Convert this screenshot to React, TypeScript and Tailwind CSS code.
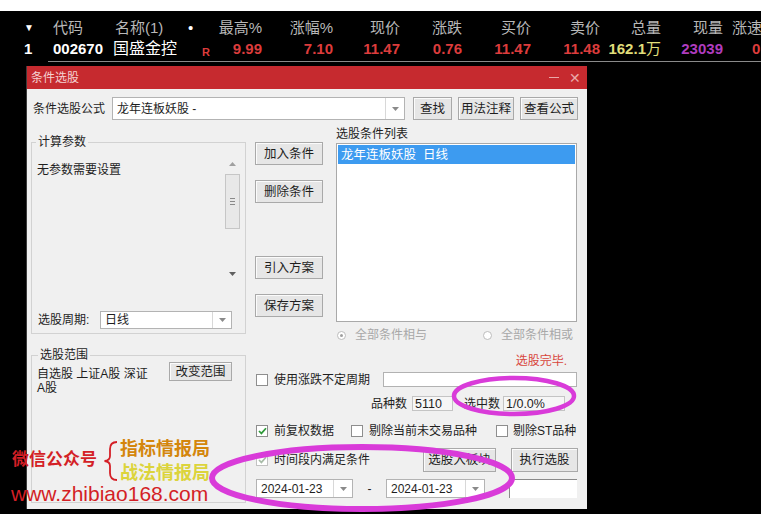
import React from 'react';

const Btn = ({ children, className = '' }: { children: React.ReactNode; className?: string }) => (
  <div
    className={`flex shrink-0 items-center justify-center border border-[#a9a9a9] bg-[#e6e6e6] text-[12.5px] leading-[14px] text-[#1e1e1e] shadow-[inset_1px_1px_0_#fbfbfb] ${className}`}
  >
    {children}
  </div>
);

const Combo = ({ text, className = '' }: { text: string; className?: string }) => (
  <div className={`flex shrink-0 border border-[#b3b3b3] bg-white ${className}`}>
    <div className="flex flex-1 items-center pl-[4px] text-[12px] leading-[14px] text-[#1e1e1e]">{text}</div>
    <div className="flex w-[19px] items-center justify-center border-l border-[#d8d8d8]">
      <svg width="7" height="4" viewBox="0 0 7 4">
        <path d="M0 0h7L3.5 4z" fill="#8a8a8a" />
      </svg>
    </div>
  </div>
);

const Check = ({ checked = false, dim = false }: { checked?: boolean; dim?: boolean }) => (
  <div
    className={`flex h-[12px] w-[12px] shrink-0 items-center justify-center border bg-white ${
      dim ? 'border-[#c2c2c2]' : 'border-[#8e8e8e]'
    }`}
  >
    {checked && (
      <svg width="9" height="8" viewBox="0 0 9 8">
        <path d="M1 4l2.4 2.4L8 1.2" stroke={dim ? '#a8bca8' : '#2f9a3a'} strokeWidth="1.7" fill="none" />
      </svg>
    )}
  </div>
);

const Radio = ({ on = false }: { on?: boolean }) => (
  <div className="flex h-[9px] w-[9px] shrink-0 items-center justify-center rounded-full border border-[#bdbdbd] bg-white">
    {on && <div className="h-[3px] w-[3px] rounded-full bg-[#a0a0a0]" />}
  </div>
);

const columns = [
  { cls: 'w-[45px] pl-[24px]', head: <span className="text-[10px] text-white">▼</span>, val: <span className="text-white">1</span> },
  { cls: 'w-[65px] pl-[8px]', head: '代码', val: <span className="text-white">002670</span> },
  { cls: 'w-[75px] pl-[5px]', head: '名称(1)', val: <span className="-ml-[2px] text-[16px] font-normal text-white">国盛金控</span> },
  { cls: 'w-[25px] pl-[3px]', head: <span className="text-white">•</span>, val: <span className="mt-[6px] pl-[14px] text-[11px] text-[#dc3c3c]">R</span> },
  { cls: 'w-[52px] justify-end', head: '最高%', val: <span className="text-[#dc3c3c]">9.99</span> },
  { cls: 'w-[71px] justify-end', head: '涨幅%', val: <span className="text-[#dc3c3c]">7.10</span> },
  { cls: 'w-[67px] justify-end', head: '现价', val: <span className="text-[#dc3c3c]">11.47</span> },
  { cls: 'w-[62px] justify-end', head: '涨跌', val: <span className="text-[#dc3c3c]">0.76</span> },
  { cls: 'w-[69px] justify-end', head: '买价', val: <span className="text-[#dc3c3c]">11.47</span> },
  { cls: 'w-[69px] justify-end', head: '卖价', val: <span className="text-[#dc3c3c]">11.48</span> },
  { cls: 'w-[61px] justify-end', head: '总量', val: <span className="text-[#e0de7a]">162.1<span className="font-normal">万</span></span> },
  { cls: 'w-[62px] justify-end', head: '现量', val: <span className="text-[#ae3cbe]">23039</span> },
  { cls: 'w-[50px] pl-[9px]', head: '涨速', val: <span className="pl-[20px] text-[#dc3c3c]">0</span> },
];

export default function App() {
  return (
    <div className="relative h-[514px] w-[761px] overflow-hidden bg-black font-[family-name:'Liberation_Sans','Noto_Sans_CJK_SC',sans-serif]">
      <div className="h-[11px] bg-white" />

      {/* quote list */}
      <div className="mt-[5px] flex h-[24px] items-center text-[15px] leading-[18px] text-[#b8b8b8]">
        {columns.map((c, i) => (
          <div key={i} className={`flex shrink-0 items-center ${c.cls}`}>
            {c.head}
          </div>
        ))}
      </div>
      <div className="flex h-[18px] items-center text-[15px] font-bold leading-[18px]">
        {columns.map((c, i) => (
          <div key={i} className={`flex shrink-0 items-center ${c.cls}`}>
            {c.val}
          </div>
        ))}
      </div>
      <div className="mt-[3px] ml-[48px] h-[1px] bg-[#8a8a8a]" />

      {/* dialog */}
      <div className="mt-[4px] ml-[26px] flex h-[443px] w-[561px] flex-col border-l border-[#3c3c3c] bg-[#f0f0f0] text-[12px] leading-[14px] text-[#1e1e1e]">
        <div className="flex h-[23px] shrink-0 items-center bg-[#c62a2f] pl-[4px] pr-[6px] text-[12px] text-[#f5d2d2]">
          <span>条件选股</span>
          <span className="ml-auto h-[1px] w-[10px] bg-[#eaa8a8]" />
          <span className="ml-[10px] text-[14px] text-[#eaa8a8]">✕</span>
        </div>

        {/* formula row */}
        <div className="mt-[8px] flex h-[23px] items-center pl-[6px]">
          <span className="w-[79px] shrink-0">条件选股公式</span>
          <Combo text="龙年连板妖股  -" className="h-[23px] w-[293px]" />
          <Btn className="ml-[8px] h-[23px] w-[39px]">查找</Btn>
          <Btn className="ml-[6px] h-[23px] w-[56px]">用法注释</Btn>
          <Btn className="ml-[6px] h-[23px] w-[58px]">查看公式</Btn>
        </div>

        <div className="mt-[5px] flex pl-[4px]">
          {/* left column */}
          <div className="flex w-[215px] shrink-0 flex-col">
            <fieldset className="mt-[10px] h-[199px] border border-[#d2d2d2]">
              <legend className="ml-[4px] px-[2px] leading-[14px]">计算参数</legend>
              <div className="flex h-[133px] pl-[5px] pr-[4px]">
                <div className="flex-1 pt-[14px]">无参数需要设置</div>
                <div className="mt-[3px] flex h-[130px] w-[17px] flex-col items-center">
                  <svg className="mt-[10px]" width="7" height="4" viewBox="0 0 7 4">
                    <path d="M0 4h7L3.5 0z" fill="#a0a0a0" />
                  </svg>
                  <div className="mt-[8px] flex h-[55px] w-[15px] items-center justify-center border border-[#c6c6c6] bg-[#e8e8e8]">
                    <div className="flex flex-col gap-[2px]">
                      <div className="h-[1px] w-[5px] bg-[#8a8a8a]" />
                      <div className="h-[1px] w-[5px] bg-[#8a8a8a]" />
                      <div className="h-[1px] w-[5px] bg-[#8a8a8a]" />
                    </div>
                  </div>
                  <svg className="mt-auto mb-[6px]" width="7" height="4" viewBox="0 0 7 4">
                    <path d="M0 0h7L3.5 4z" fill="#606060" />
                  </svg>
                </div>
              </div>
              <div className="mt-[29px] flex h-[18px] items-center pl-[6px]">
                <span className="w-[62px] shrink-0">选股周期:</span>
                <Combo text="日线" className="h-[18px] w-[132px]" />
              </div>
            </fieldset>

            <fieldset className="mt-[14px] h-[155px] border border-[#d2d2d2]">
              <legend className="ml-[6px] px-[2px] leading-[14px]">选股范围</legend>
              <div className="flex items-start pl-[5px]">
                <div className="w-[126px] shrink-0 pt-[5px] leading-[14px]">
                  自选股 上证A股 深证
                  <br />
                  A股
                </div>
                <Btn className="ml-[6px] h-[19px] w-[63px]">改变范围</Btn>
              </div>
            </fieldset>
          </div>

          {/* right area */}
          <div className="ml-[9px] flex w-[322px] shrink-0 flex-col">
            <div className="flex h-[197px]">
              <div className="flex w-[68px] shrink-0 flex-col">
                <Btn className="mt-[17px] h-[23px]">加入条件</Btn>
                <Btn className="mt-[15px] h-[23px]">删除条件</Btn>
                <Btn className="mt-[53px] h-[23px]">引入方案</Btn>
                <Btn className="mt-[15px] h-[23px]">保存方案</Btn>
              </div>
              <div className="ml-[13px] flex w-[241px] shrink-0 flex-col">
                <div className="pt-[2px]">选股条件列表</div>
                <div className="mt-[2px] h-[179px] border border-[#a9a9a9] bg-white p-[1px]">
                  <div className="flex h-[19px] items-center bg-[#3d9bf0] pl-[3px] text-[12.5px] text-white">
                    龙年连板妖股&nbsp;&nbsp;日线
                  </div>
                </div>
              </div>
            </div>

            <div className="mt-[6px] flex h-[14px] items-center pl-[82px] text-[#a8a8a8]">
              <div className="flex w-[146px] shrink-0 items-center">
                <Radio on />
                <span className="ml-[9px]">全部条件相与</span>
              </div>
              <div className="flex items-center">
                <Radio />
                <span className="ml-[9px]">全部条件相或</span>
              </div>
            </div>

            <div className="mt-[12px] h-[14px] pr-[10px] text-right text-[#d8463c]">选股完毕.</div>

            <div className="mt-[4px] flex h-[15px] items-center">
              <div className="ml-[1px]">
                <Check />
              </div>
              <span className="ml-[6px] w-[109px] shrink-0">使用涨跌不定周期</span>
              <div className="h-[15px] flex-1 border border-[#b2b2b2] bg-white" />
            </div>

            <div className="mt-[9px] flex h-[15px] items-center pl-[116px]">
              <span className="w-[41px] shrink-0">品种数</span>
              <div className="flex h-[15px] w-[41px] items-center border border-[#c4c4c4] bg-[#f6f6f6] pl-[2px] text-[12.5px]">5110</div>
              <span className="ml-[11px] w-[39px] shrink-0">选中数</span>
              <div className="flex h-[15px] w-[62px] items-center border border-[#c4c4c4] bg-[#f6f6f6] pl-[2px] text-[12.5px]">1/0.0%</div>
            </div>

            <div className="mt-[13px] flex h-[13px] items-center">
              <div className="ml-[1px]">
                <Check checked />
              </div>
              <span className="ml-[6px] w-[77px] shrink-0">前复权数据</span>
              <Check />
              <span className="ml-[6px] w-[127px] shrink-0">剔除当前未交易品种</span>
              <Check />
              <span className="ml-[5px]">剔除ST品种</span>
            </div>

            <div className="mt-[11px] flex h-[24px] items-center">
              <div className="ml-[1px]">
                <Check checked dim />
              </div>
              <span className="ml-[6px] w-[149px] shrink-0">时间段内满足条件</span>
              <Btn className="h-[24px] w-[73px]">选股入板块</Btn>
              <Btn className="ml-[15px] h-[24px] w-[67px]">执行选股</Btn>
            </div>

            <div className="mt-[7px] flex h-[19px] items-center">
              <Combo text="2024-01-23" className="ml-[1px] h-[19px] w-[97px]" />
              <span className="w-[33px] shrink-0 text-center">-</span>
              <Combo text="2024-01-23" className="h-[19px] w-[99px]" />
              <div className="ml-[24px] h-[19px] flex-1 border-l border-t border-[#8a8a8a] bg-white" />
            </div>
          </div>
        </div>
      </div>

      {/* hand-drawn marks */}
      <svg className="pointer-events-none absolute top-0 left-0" width="761" height="514" viewBox="0 0 761 514">
        <ellipse cx="514" cy="396" rx="60" ry="18" fill="none" stroke="#d93bd9" strokeWidth="4.5" />
        <ellipse cx="362" cy="478" rx="150" ry="31" fill="none" stroke="#d93bd9" strokeWidth="6" />
        <path
          d="M117 442 Q110 442 110 449 L110 456 Q110 460.5 104.5 461 Q110 461.5 110 466 L110 473 Q110 480 117 480"
          fill="none"
          stroke="#d41f26"
          strokeWidth="1.8"
        />
      </svg>

      {/* watermark */}
      <div className="pointer-events-none absolute top-[449px] left-[12px] text-[17px] leading-[22px] font-bold text-[#d41f26]">
        微信公众号
      </div>
      <div className="pointer-events-none absolute top-[437px] left-[120px] flex flex-col text-[18px] leading-[24px] font-bold">
        <span className="text-[#d4860c]">指标情报局</span>
        <span className="text-[#dcd43c]">战法情报局</span>
      </div>
      <div className="pointer-events-none absolute top-[482px] left-[11px] text-[21px] leading-[24px] text-[#d41f26]">
        www.zhibiao168.com
      </div>
    </div>
  );
}
